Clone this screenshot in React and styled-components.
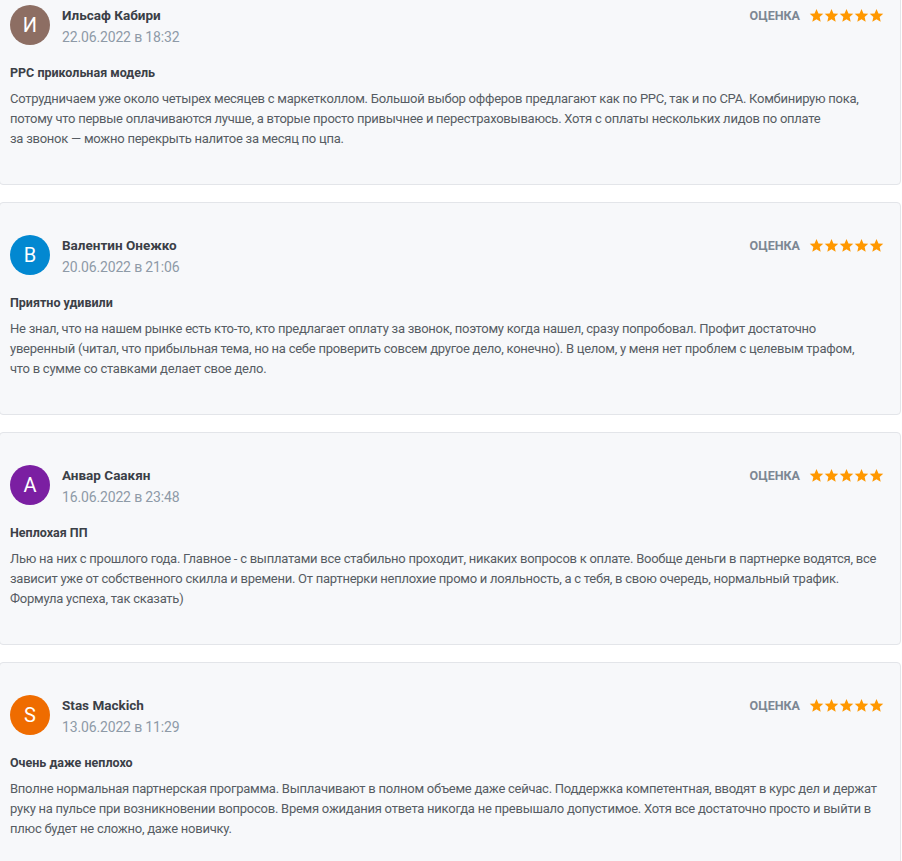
import React from "react";
import styled, { createGlobalStyle } from "styled-components";

const GlobalStyle = createGlobalStyle`
  html, body {
    margin: 0;
    padding: 0;
    background: #ffffff;
    overflow: hidden;
  }
  body {
    font-family: Roboto, "Noto Sans", sans-serif;
  }
`;

const reviews = [
  {
    letter: "И",
    color: "#8d6e63",
    name: "Ильсаф Кабири",
    date: "22.06.2022 в 18:32",
    title: "PPC прикольная модель",
    text: "Сотрудничаем уже около четырех месяцев с маркетколлом. Большой выбор офферов предлагают как по PPC, так и по CPA. Комбинирую пока, потому что первые оплачиваются лучше, а вторые просто привычнее и перестраховываюсь. Хотя с оплаты нескольких лидов по оплате за\u00a0звонок\u00a0— можно перекрыть налитое за месяц по цпа.",
  },
  {
    letter: "В",
    color: "#0288d1",
    name: "Валентин Онежко",
    date: "20.06.2022 в 21:06",
    title: "Приятно удивили",
    text: "Не знал, что на нашем рынке есть кто-то, кто предлагает оплату за звонок, поэтому когда нашел, сразу попробовал. Профит достаточно уверенный (читал, что прибыльная тема, но на себе проверить совсем другое дело, конечно). В целом, у меня нет проблем с целевым трафом, что\u00a0в сумме со ставками делает свое дело.",
  },
  {
    letter: "А",
    color: "#7b1fa2",
    name: "Анвар Саакян",
    date: "16.06.2022 в 23:48",
    title: "Неплохая ПП",
    text: "Лью на них с прошлого года. Главное - с выплатами все стабильно проходит, никаких вопросов к оплате. Вообще деньги в партнерке водятся, все зависит уже от собственного скилла и времени. От партнерки неплохие промо и лояльность, а с тебя, в свою очередь, нормальный трафик. Формула успеха, так сказать)",
  },
  {
    letter: "S",
    color: "#ef6c00",
    name: "Stas Mackich",
    date: "13.06.2022 в 11:29",
    title: "Очень даже неплохо",
    text: "Вполне нормальная партнерская программа. Выплачивают в полном объеме даже сейчас. Поддержка компетентная, вводят в курс дел и держат руку на пульсе при возникновении вопросов. Время ожидания ответа никогда не превышало допустимое. Хотя все достаточно просто и выйти в плюс будет не сложно, даже новичку.",
  },
];

const List = styled.div`
  display: flex;
  flex-direction: column;
  gap: 17px;
  margin: -28px 0 0 -1px;
  width: 902px;
`;

const Card = styled.article`
  box-sizing: border-box;
  height: 213px;
  background: #f7f8fa;
  border: 1px solid #e3e5e9;
  border-radius: 4px;
  padding: 32px 16px 37px 10px;
`;

const Header = styled.div`
  display: flex;
  align-items: flex-start;
`;

const Avatar = styled.div`
  width: 40px;
  height: 40px;
  border-radius: 50%;
  background: ${(p) => p.$bg};
  color: #ffffff;
  display: flex;
  align-items: center;
  justify-content: center;
  font-size: 20px;
  flex-shrink: 0;
`;

const Author = styled.div`
  display: flex;
  flex-direction: column;
  gap: 2px;
  margin-left: 12px;
  flex: 1;
`;

const Name = styled.span`
  font-size: 13.5px;
  line-height: 20px;
  font-weight: 700;
  color: #3b4047;
`;

const DateText = styled.span`
  font-size: 14px;
  line-height: 20px;
  letter-spacing: -0.15px;
  color: #8e9aa7;
`;

const Rating = styled.div`
  display: flex;
  align-items: center;
  gap: 9px;
  height: 18px;
  margin-top: 1px;
`;

const RatingLabel = styled.span`
  font-size: 12.5px;
  font-weight: 700;
  color: #7d8793;
`;

const Stars = styled.div`
  display: flex;
`;

const Title = styled.h3`
  margin: 16px 0 0;
  font-size: 12.5px;
  line-height: 20px;
  font-weight: 700;
  color: #3b4047;
`;

const Body = styled.p`
  margin: 6px 0 0;
  font-size: 13px;
  line-height: 20px;
  letter-spacing: -0.25px;
  color: #565c63;
`;

const Star = () => (
  <svg width="15" height="15" viewBox="0 0 24 24">
    <path
      d="M12 1.5l3.1 7.1 7.7.7-5.8 5.1 1.7 7.6L12 18l-6.7 4 1.7-7.6-5.8-5.1 7.7-.7z"
      fill="#ff9800"
    />
  </svg>
);

export default function App() {
  return (
    <>
      <GlobalStyle />
      <List>
        {reviews.map((r) => (
          <Card key={r.name}>
            <Header>
              <Avatar $bg={r.color}>{r.letter}</Avatar>
              <Author>
                <Name>{r.name}</Name>
                <DateText>{r.date}</DateText>
              </Author>
              <Rating>
                <RatingLabel>ОЦЕНКА</RatingLabel>
                <Stars>
                  {[0, 1, 2, 3, 4].map((i) => (
                    <Star key={i} />
                  ))}
                </Stars>
              </Rating>
            </Header>
            <Title>{r.title}</Title>
            <Body>{r.text}</Body>
          </Card>
        ))}
      </List>
    </>
  );
}
